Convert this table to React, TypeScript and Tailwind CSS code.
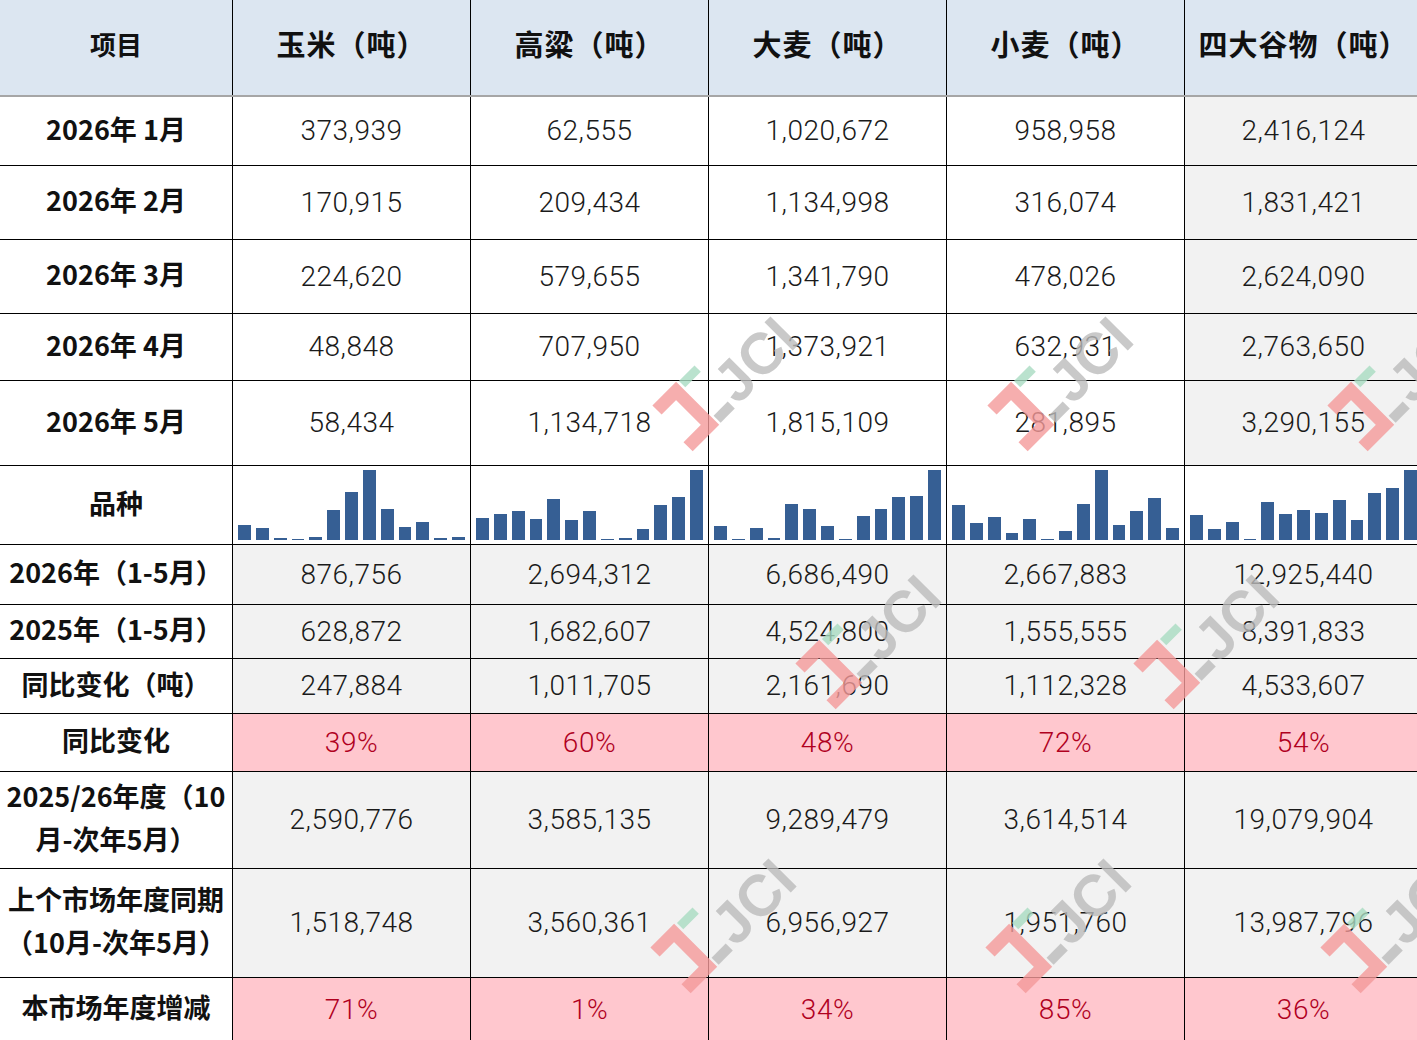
import React from 'react';

type Tone = 'white' | 'gray' | 'pink';

interface DataRow {
  label: React.ReactNode;
  values: string[];
  height: string;
  tones: Tone[];
}

const cjk = "font-['Noto_Sans_CJK_SC',sans-serif]";
const num = "font-['Roboto','Noto_Sans_CJK_SC',sans-serif] font-light tracking-[0.5px]";

const headers = ['玉米（吨）', '高粱（吨）', '大麦（吨）', '小麦（吨）', '四大谷物（吨）'];

const monthTones: Tone[] = ['white', 'white', 'white', 'white', 'gray'];
const grayTones: Tone[] = ['gray', 'gray', 'gray', 'gray', 'gray'];
const pinkTones: Tone[] = ['pink', 'pink', 'pink', 'pink', 'pink'];

const topRows: DataRow[] = [
  { label: '2026年 1月', values: ['373,939', '62,555', '1,020,672', '958,958', '2,416,124'], height: 'h-[69px]', tones: monthTones },
  { label: '2026年 2月', values: ['170,915', '209,434', '1,134,998', '316,074', '1,831,421'], height: 'h-[74px]', tones: monthTones },
  { label: '2026年 3月', values: ['224,620', '579,655', '1,341,790', '478,026', '2,624,090'], height: 'h-[74px]', tones: monthTones },
  { label: '2026年 4月', values: ['48,848', '707,950', '1,373,921', '632,931', '2,763,650'], height: 'h-[67px]', tones: monthTones },
  { label: '2026年 5月', values: ['58,434', '1,134,718', '1,815,109', '281,895', '3,290,155'], height: 'h-[85px]', tones: monthTones },
];

const bottomRows: DataRow[] = [
  { label: '2026年（1-5月）', values: ['876,756', '2,694,312', '6,686,490', '2,667,883', '12,925,440'], height: 'h-[60px]', tones: grayTones },
  { label: '2025年（1-5月）', values: ['628,872', '1,682,607', '4,524,800', '1,555,555', '8,391,833'], height: 'h-[54px]', tones: grayTones },
  { label: '同比变化（吨）', values: ['247,884', '1,011,705', '2,161,690', '1,112,328', '4,533,607'], height: 'h-[55px]', tones: grayTones },
  { label: '同比变化', values: ['39%', '60%', '48%', '72%', '54%'], height: 'h-[58px]', tones: pinkTones },
  {
    label: (
      <>
        2025/26年度（10
        <br />
        月-次年5月）
      </>
    ),
    values: ['2,590,776', '3,585,135', '9,289,479', '3,614,514', '19,079,904'],
    height: 'h-[97px]',
    tones: grayTones,
  },
  {
    label: (
      <>
        上个市场年度同期
        <br />
        （10月-次年5月）
      </>
    ),
    values: ['1,518,748', '3,560,361', '6,956,927', '1,951,760', '13,987,796'],
    height: 'h-[109px]',
    tones: grayTones,
  },
  { label: '本市场年度增减', values: ['71%', '1%', '34%', '85%', '36%'], height: 'h-[64px]', tones: pinkTones },
];

// bar heights in px (max 70), one list per grain, 13 bars each
const sparks: number[][] = [
  [15, 12, 2, 1, 3, 30, 48, 70, 31, 13, 18, 2, 3],
  [22, 26, 29, 21, 41, 20, 29, 1, 2, 11, 35, 43, 70],
  [14, 1, 12, 2, 36, 31, 14, 1, 24, 31, 43, 44, 70],
  [35, 17, 23, 7, 21, 1, 9, 36, 70, 15, 29, 42, 12],
  [25, 11, 18, 1, 38, 26, 30, 27, 40, 20, 47, 52, 70],
];

const toneClass: Record<Tone, string> = {
  white: 'bg-white text-[#1a1a1a]',
  gray: 'bg-[#f2f2f2] text-[#1a1a1a]',
  pink: 'bg-[#ffc7ce] text-[#b0001e]',
};

const marks: [number, number][] = [
  [657, 410],
  [992, 410],
  [1332, 410],
  [800, 668],
  [1138, 668],
  [655, 952],
  [990, 952],
  [1325, 952],
];

function LabelCell({ children }: { children: React.ReactNode }) {
  return (
    <div
      className={`${cjk} w-[233px] shrink-0 flex items-center justify-center text-center border-r border-b border-black bg-white text-[27px] font-bold leading-[43px] text-[#111] pb-[6px]`}
    >
      <div>{children}</div>
    </div>
  );
}

function Row({ row }: { row: DataRow }) {
  return (
    <div className={`flex ${row.height}`}>
      <LabelCell>{row.label}</LabelCell>
      {row.values.map((v, i) => (
        <div
          key={i}
          className={`${num} ${toneClass[row.tones[i]]} w-[238px] shrink-0 flex items-center justify-center border-r border-b border-black text-[28px]`}
        >
          {v}
        </div>
      ))}
    </div>
  );
}

function Watermark({ x, y }: { x: number; y: number }) {
  return (
    <g transform={`translate(${x} ${y}) rotate(-45)`} opacity={0.8}>
      <path d="M0 0 H27 V48 H-4" fill="none" stroke="#f59a9a" strokeWidth={13} strokeLinejoin="miter" />
      <rect x={36} y={-5} width={22} height={9} fill="#a9dcc2" />
      <rect x={36} y={44} width={20} height={10} fill="#bcbcbc" />
      <text
        x={60}
        y={54}
        fontSize={58}
        fontWeight={700}
        fill="#bcbcbc"
        fontFamily="'Liberation Sans', Arial, sans-serif"
      >
        JCI
      </text>
    </g>
  );
}

export default function App() {
  return (
    <div className="relative w-[1417px] h-[1040px] overflow-hidden bg-white">
      <div className="w-[1423px]">
        {/* header */}
        <div className="flex h-[97px] bg-[#dce6f1] border-b-2 border-[#a6a6a6]">
          <div
            className={`${cjk} w-[233px] shrink-0 flex items-center justify-center border-r border-black text-[26px] font-bold text-[#111] pb-[8px]`}
          >
            项目
          </div>
          {headers.map((h) => (
            <div
              key={h}
              className={`${cjk} w-[238px] shrink-0 flex items-center justify-center border-r border-black text-[29px] tracking-[1px] font-bold text-[#111] pb-[8px]`}
            >
              {h}
            </div>
          ))}
        </div>

        {topRows.map((r, i) => (
          <Row key={i} row={r} />
        ))}

        {/* sparkline row */}
        <div className="flex h-[79px]">
          <LabelCell>品种</LabelCell>
          {sparks.map((bars, i) => (
            <div
              key={i}
              className="w-[238px] shrink-0 flex items-end gap-[5px] px-[5px] pb-[4px] border-r border-b border-black bg-white"
            >
              {bars.map((h, j) => (
                <div key={j} className="flex-1 bg-[#365f94]" style={{ height: `${h}px` }} />
              ))}
            </div>
          ))}
        </div>

        {bottomRows.map((r, i) => (
          <Row key={i} row={r} />
        ))}
      </div>

      {/* watermark overlay */}
      <svg className="pointer-events-none absolute inset-0" width={1417} height={1040}>
        {marks.map(([x, y], i) => (
          <Watermark key={i} x={x} y={y} />
        ))}
      </svg>
    </div>
  );
}
